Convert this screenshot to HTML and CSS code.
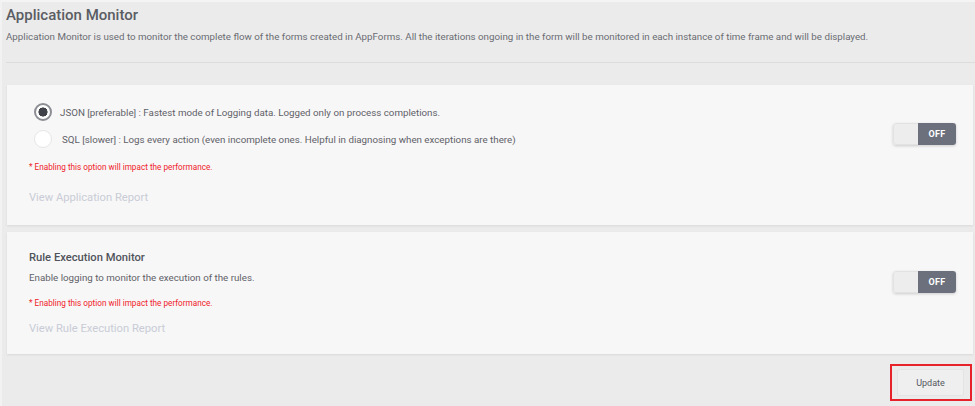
FILE: index.html
```html
<!DOCTYPE html>
<html lang="en">
<head>
<meta charset="utf-8">
<title>Application Monitor</title>
<link rel="stylesheet" href="styles.css">
</head>
<body>
<div class="page">
  <header class="header">
    <h1 class="title">Application Monitor</h1>
    <p class="desc">Application Monitor is used to monitor the complete flow of the forms created in AppForms. All the iterations ongoing in the form will be monitored in each instance of time frame and will be displayed.</p>
  </header>
  <main class="content">
    <section class="card card-app">
      <div class="card-body">
        <div class="options">
          <label class="option">
            <span class="radio checked"></span>
            <span class="opt-text">JSON [preferable] : Fastest mode of Logging data. Logged only on process completions.</span>
          </label>
          <label class="option option-2">
            <span class="radio"></span>
            <span class="opt-text opt-text-2">SQL [slower] : Logs every action (even incomplete ones. Helpful in diagnosing when exceptions are there)</span>
          </label>
        </div>
        <p class="note note-app">* Enabling this option will impact the performance.</p>
        <a class="report report-app">View Application Report</a>
      </div>
      <div class="toggle"><span class="toggle-handle"></span><span class="toggle-label">OFF</span></div>
    </section>
    <section class="card card-rule">
      <div class="card-body">
        <h2 class="card-title">Rule Execution Monitor</h2>
        <p class="card-desc">Enable logging to monitor the execution of the rules.</p>
        <p class="note note-rule">* Enabling this option will impact the performance.</p>
        <a class="report report-rule">View Rule Execution Report</a>
      </div>
      <div class="toggle"><span class="toggle-handle"></span><span class="toggle-label">OFF</span></div>
    </section>
    <div class="footer">
      <div class="highlight"><button class="btn-update">Update</button></div>
    </div>
  </main>
</div>
</body>
</html>
```

FILE: styles.css
```css
* { box-sizing: border-box; }
html, body { margin: 0; padding: 0; }
body {
  background: #ebebeb;
  font-family: Roboto, "Liberation Sans", Arial, sans-serif;
  color: #5b5e66;
  width: 975px;
  height: 406px;
  overflow: hidden;
}
.page {
  border-top: 2px solid #f4f4f4;
  border-left: 2px solid #f2f2f2;
  height: 406px;
}
.header {
  padding: 3px 0 0 4px;
}
.title {
  margin: 0;
  font-size: 15px;
  line-height: 20px;
  font-weight: 500;
  color: #5a5d63;
}
.desc {
  margin: 5px 0 0;
  font-size: 9.75px;
  line-height: 14px;
  color: #6a6c72;
  padding-bottom: 18px;
  border-bottom: 1px solid #dcdcdc;
}
.content {
  padding: 22px 0 0 5px;
}
.card {
  background: #f7f7f7;
  width: 966px;
  display: flex;
  justify-content: space-between;
  align-items: flex-start;
  box-shadow: 0 1px 2px rgba(0,0,0,0.08);
}
.card-app { height: 140px; padding: 18px 17px 0 22px; }
.card-rule { height: 122px; margin-top: 7px; padding: 18px 17px 0 22px; }
.options { padding-left: 5px; }
.option {
  display: flex;
  align-items: center;
  height: 18px;
}
.option-2 { margin-top: 9px; }
.radio {
  width: 18px;
  height: 18px;
  border-radius: 50%;
  background: #fff;
  border: 1px solid #e6e6e6;
  flex: none;
}
.radio.checked {
  border: 2px solid #8c8e94;
  background: radial-gradient(circle, #3f4248 0 4.3px, #fff 4.8px);
}
.opt-text {
  margin-left: 8px;
  font-size: 9.75px;
  color: #5f6168;
}
.opt-text-2 { margin-left: 10px; }
.note {
  margin: 13px 0 0;
  font-size: 8.2px;
  line-height: 12px;
  color: #f0222a;
}
.note-rule { margin-top: 12px; }
.report {
  display: block;
  margin-top: 18px;
  font-size: 11.2px;
  line-height: 14px;
  color: #c9ccd6;
}
.report-rule { margin-top: 13px; }
.card-title {
  margin: 0;
  font-size: 11.2px;
  line-height: 16px;
  font-weight: 500;
  color: #50535b;
}
.card-desc {
  margin: 5px 0 0;
  font-size: 9.75px;
  line-height: 14px;
  color: #5f6168;
}
.toggle {
  display: flex;
  margin-top: 20px;
  width: 63px;
  height: 22px;
  border-radius: 3px;
  overflow: hidden;
  box-shadow: 0 1px 3px rgba(0,0,0,0.18);
  flex: none;
}
.card-rule .toggle { margin-top: 21px; }
.toggle-handle {
  width: 25px;
  background: #ededed;
  border: 1px solid #e2e2e2;
  border-right: none;
  border-radius: 3px 0 0 3px;
}
.toggle-label {
  flex: 1;
  background: #6b707c;
  color: #fff;
  font-size: 9px;
  font-weight: 700;
  display: flex;
  align-items: center;
  justify-content: center;
  letter-spacing: 0.3px;
}
.footer {
  display: flex;
  justify-content: flex-end;
  padding: 10px 3px 0 0;
}
.highlight {
  border: 2px solid #e8222b;
  width: 82px;
  height: 37px;
  padding: 3px 6px 3px 5px;
}
.btn-update {
  width: 100%;
  height: 100%;
  background: #efefef;
  border: 1px solid #e4e4e4;
  border-radius: 2px;
  font-family: Roboto, "Liberation Sans", Arial, sans-serif;
  font-size: 9px;
  color: #55585f;
  padding: 0;
}
```
